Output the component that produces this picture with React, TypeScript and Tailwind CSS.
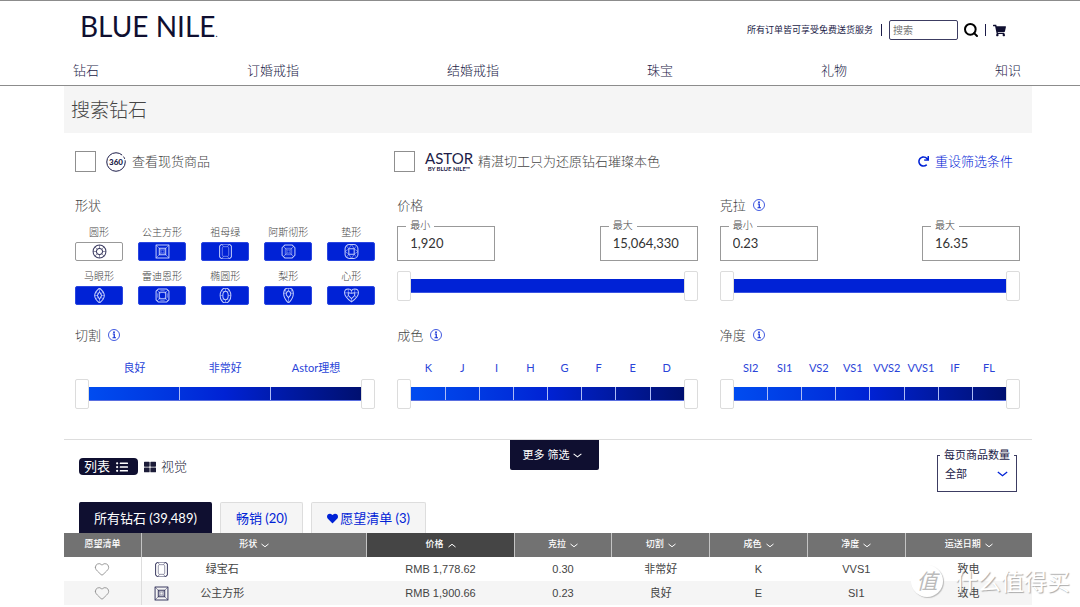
import React from "react";
import { FaHeart, FaListUl, FaRedo, FaShoppingCart, FaThLarge } from "react-icons/fa";
import { Heart, Search } from "lucide-react";

type ShapeKind =
  | "round"
  | "princess"
  | "emerald"
  | "asscher"
  | "cushion"
  | "marquise"
  | "radiant"
  | "oval"
  | "pear"
  | "heart";

function ShapeIcon({ kind }: { kind: ShapeKind }) {
  const drawings: Record<ShapeKind, React.ReactNode> = {
    round: (
      <>
        <circle cx="14" cy="14" r="12" />
        <path d="M14 8l4.3 1.7L20 14l-1.7 4.3L14 20l-4.3-1.7L8 14l1.7-4.3z" />
        <path d="M14 2v6M26 14h-6M14 26v-6M2 14h6M22.5 5.5l-4.2 4.2M22.5 22.5l-4.2-4.2M5.5 22.5l4.2-4.2M5.5 5.5l4.2 4.2" strokeWidth="1" />
      </>
    ),
    princess: (
      <>
        <path d="M2 2h24v24H2zM8 8h12v12H8z" />
        <path d="M2 2l9 9M26 2l-9 9M2 26l9-9M26 26l-9-9M11 11h6v6h-6z" strokeWidth="1" />
      </>
    ),
    emerald: (
      <>
        <path d="M7 0h14l4 4v20l-4 4H7l-4-4V4z" />
        <path d="M10 5h8l2 2v14l-2 2h-8l-2-2V7zM7 0l3 5M21 0l-3 5M7 28l3-5M21 28l-3-5" strokeWidth="1" />
      </>
    ),
    asscher: (
      <>
        <path d="M7 2h14l5 5v14l-5 5H7l-5-5V7z" />
        <path d="M8 8h12v12H8zM11 11h6v6h-6zM4 4l7 7M24 4l-7 7M4 24l7-7M24 24l-7-7" strokeWidth="1" />
      </>
    ),
    cushion: (
      <>
        <rect x="2" y="1" width="24" height="26" rx="8" />
        <path d="M9 9h10v10H9z" />
        <path d="M9 9L5 4M19 9l4-5M9 19l-4 5M19 19l4 5M9 9l5-8 5 8 7 5-7 5-5 8-5-8-7-5z" strokeWidth="1" />
      </>
    ),
    marquise: (
      <>
        <path d="M14 0c6 5 9 9 9 14s-3 9-9 14C8 23 5 19 5 14S8 5 14 0z" />
        <path d="M14 7l4 7-4 7-4-7z" />
        <path d="M14 0v7M14 28v-7M5 14h5M23 14h-5M8 7l3 5M20 7l-3 5M8 21l3-5M20 21l-3-5" strokeWidth="1" />
      </>
    ),
    radiant: (
      <>
        <path d="M6 2h16l4 4v16l-4 4H6l-4-4V6z" />
        <path d="M8 8h12v12H8z" />
        <path d="M4 4l6 6M24 4l-6 6M4 24l6-6M24 24l-6-6M5 10v8M23 10v8M10 5h8M10 23h8" strokeWidth="1" />
      </>
    ),
    oval: (
      <>
        <ellipse cx="14" cy="14" rx="10" ry="14" />
        <ellipse cx="14" cy="14" rx="5" ry="8" />
        <path d="M14 0v6M14 22v6M4 14h5M19 14h5M7 4l4 4M21 4l-4 4M7 24l4-4M21 24l-4-4" strokeWidth="1" />
      </>
    ),
    pear: (
      <>
        <path d="M14 28C9 23 5 17 5 10.500C5 4 9 0 14 0s9 4 9 10.500C23 17 19 23 14 28z" />
        <path d="M14 18l-4-5V9l4-4 4 4v4z" />
        <path d="M14 28V18M14 0v5M5 10h5M23 10h-5M8 3l2 6M20 3l-2 6" strokeWidth="1" />
      </>
    ),
    heart: (
      <>
        <path d="M14 26C7 21 1 16 1 9c0-4 3-7 7-7 3 0 5 1 6 3 1-2 3-3 6-3 4 0 7 3 7 7 0 7-6 12-13 17z" />
        <path d="M14 20l-6-6V9l6 1 6-1v5z" />
        <path d="M14 26v-6M14 5v5M1 9h7M27 9h-7M5 18l3-4M23 18l-3-4M8 2v7M20 2v7" strokeWidth="1" />
      </>
    ),
  };
  return (
    <svg viewBox="0 0 28 28" className="size-[15px]" fill="none" stroke="currentColor" strokeWidth="1.900" strokeLinejoin="round" aria-hidden="true">
      {drawings[kind]}
    </svg>
  );
}

function Chevron({ up = false, className = "" }: { up?: boolean; className?: string }) {
  return (
    <svg viewBox="0 0 16 9" className={className} fill="none" stroke="currentColor" strokeWidth="2" aria-hidden="true">
      <path d={up ? "M1 7.500l7-5.500 7 5.500" : "M1 1.500l7 5.500 7-5.500"} />
    </svg>
  );
}

function InfoButton({ topic }: { topic: string }) {
  return (
    <button type="button" aria-label={topic} className="text-[#1230d8]">
      <svg viewBox="0 0 24 24" className="size-3" fill="none" stroke="currentColor" strokeWidth="1.600" aria-hidden="true">
        <circle cx="12" cy="12" r="11" />
        <path d="M9.500 10H12.500v7M9 17.500h7" strokeWidth="2.400" />
        <circle cx="12" cy="6.300" r="1.800" fill="currentColor" stroke="none" />
      </svg>
    </button>
  );
}

function FilterHeading({ title, info = false }: { title: string; info?: boolean }) {
  return (
    <div className="flex h-4 items-center gap-[7px]">
      <h2 className="text-[13px] leading-4 font-light">{title}</h2>
      {info && <InfoButton topic={title} />}
    </div>
  );
}

const rangeClass =
  "pointer-events-none absolute inset-0 h-full w-full cursor-pointer appearance-none bg-transparent " +
  "[&::-webkit-slider-thumb]:pointer-events-auto [&::-webkit-slider-thumb]:h-[30px] [&::-webkit-slider-thumb]:w-[14px] " +
  "[&::-webkit-slider-thumb]:appearance-none [&::-webkit-slider-thumb]:rounded-xs [&::-webkit-slider-thumb]:border " +
  "[&::-webkit-slider-thumb]:border-[#dcdcdc] [&::-webkit-slider-thumb]:bg-white";

function DualRange({ name, steps }: { name: string; steps?: number }) {
  return (
    <div className="relative flex h-[30px] items-center px-[14px]">
      {steps ? (
        <div className="flex h-[14px] w-full divide-x divide-[#aebcf5] border-b border-[#5a6fe0] bg-linear-to-r from-[#004cf0] via-[#0022d4] to-[#001070]">
          {Array.from({ length: steps }, (_, i) => (
            <span key={i} className="flex-1" />
          ))}
        </div>
      ) : (
        <div className="h-[14px] w-full border-b border-[#3a54e2] bg-[#0022d6]" />
      )}
      <input type="range" aria-label={`${name} 最小`} min={0} max={100} defaultValue={0} className={rangeClass} />
      <input type="range" aria-label={`${name} 最大`} min={0} max={100} defaultValue={100} className={rangeClass} />
    </div>
  );
}

function NumberBox({ label, value }: { label: string; value: string }) {
  return (
    <label className="relative flex h-[35px] w-[98px] border border-[#999]">
      <span className="absolute -top-2 left-2 bg-white px-1 text-[10px] leading-3 font-light">{label}</span>
      <input type="text" defaultValue={value} className="w-full bg-transparent pl-3 text-[13px] text-[#333] outline-none" />
    </label>
  );
}

function ValueFilter({ title, info, min, max }: { title: string; info?: boolean; min: string; max: string }) {
  return (
    <section>
      <FilterHeading title={title} info={info} />
      <div className="mt-[13px] flex justify-between">
        <NumberBox label="最小" value={min} />
        <NumberBox label="最大" value={max} />
      </div>
      <div className="mt-[10px]">
        <DualRange name={title} />
      </div>
    </section>
  );
}

function GradeFilter({ title, grades }: { title: string; grades: string[] }) {
  return (
    <section>
      <FilterHeading title={title} info />
      <div className="mt-[18px] flex px-[14px] text-[11px] leading-[14px] text-[#2a44d8]">
        {grades.map((g) => (
          <span key={g} className="flex flex-1 justify-center whitespace-nowrap">
            {g}
          </span>
        ))}
      </div>
      <div className="mt-1">
        <DualRange name={title} steps={grades.length} />
      </div>
    </section>
  );
}

const shapes: { name: string; kind: ShapeKind }[] = [
  { name: "圆形", kind: "round" },
  { name: "公主方形", kind: "princess" },
  { name: "祖母绿", kind: "emerald" },
  { name: "阿斯彻形", kind: "asscher" },
  { name: "垫形", kind: "cushion" },
  { name: "马眼形", kind: "marquise" },
  { name: "雷迪恩形", kind: "radiant" },
  { name: "椭圆形", kind: "oval" },
  { name: "梨形", kind: "pear" },
  { name: "心形", kind: "heart" },
];

function ShapeFilter() {
  return (
    <section>
      <FilterHeading title="形状" />
      <div className="mt-3 grid grid-cols-5 gap-x-[15px] gap-y-2">
        {shapes.map(({ name, kind }) => (
          <label key={kind} className="flex flex-col gap-[3px] text-center">
            <span className="flex justify-center text-[10px] leading-[14px] font-light whitespace-nowrap">{name}</span>
            <button
              type="button"
              aria-label={name}
              className={
                kind === "round"
                  ? "flex h-[19px] items-center justify-center rounded-xs border border-[#999] bg-white text-[#3c3c62]"
                  : "flex h-[19px] items-center justify-center rounded-xs border border-[#2a46e0] bg-[#0022d6] text-[#c3cdfb]"
              }
            >
              <ShapeIcon kind={kind} />
            </button>
          </label>
        ))}
      </div>
    </section>
  );
}

function SiteHeader() {
  return (
    <header className="border-y border-[#8c8c8c] pt-[14px] pr-12 pb-1 pl-16 text-[#1c1c48]">
      <div className="flex h-[30px] items-center justify-between pr-[26px] pl-4">
        <a href="#home" className="text-[28px] leading-8 text-[#0f0f30]">
          BLUE NILE<span className="text-[9px]">.</span>
        </a>
        <div className="flex items-center text-[9px]">
          <span>所有订单皆可享受免费送货服务</span>
          <span className="ml-2 h-3 w-px bg-[#1c1c48]" />
          <input
            type="search"
            aria-label="搜索"
            placeholder="搜索"
            className="ml-[7px] h-5 w-[69px] rounded-xs border border-[#3c3c62] px-[3px] text-[10px] placeholder:text-[#777]"
          />
          <button type="button" aria-label="提交搜索" className="ml-[5px] text-black">
            <Search className="size-4" strokeWidth={3} />
          </button>
          <span className="ml-[6px] h-3 w-px bg-[#1c1c48]" />
          <a href="#cart" aria-label="购物车" className="ml-[7px] text-[#0f0f30]">
            <FaShoppingCart className="size-[13px]" />
          </a>
        </div>
      </div>
      <nav className="mt-4 flex h-5 items-center justify-between pr-[11px] pl-[9px] text-[13px] font-light">
        {["钻石", "订婚戒指", "结婚戒指", "珠宝", "礼物", "知识"].map((item) => (
          <a key={item} href={`#${item}`}>
            {item}
          </a>
        ))}
      </nav>
    </header>
  );
}

const checkClass = "size-[21px] appearance-none border border-[#8f8f8f] bg-white checked:bg-[#0022d6]";

function QuickFilters() {
  return (
    <div className="mt-[18px] flex h-[21px] items-center justify-between pr-[19px] pl-[11px] text-[13px] font-light">
      <label className="flex w-[319px] items-center">
        <input type="checkbox" className={checkClass} />
        <svg viewBox="0 0 40 40" className="ml-[10px] size-5 text-[#1c1c48]" aria-hidden="true">
          <circle cx="20" cy="20" r="18.500" fill="none" stroke="currentColor" strokeWidth="2" strokeDasharray="100 4 5 3 5 4" />
          <text x="20" y="26" textAnchor="middle" fontSize="16" fontWeight="900" fill="currentColor">
            360
          </text>
        </svg>
        <span className="ml-[6px]">查看现货商品</span>
      </label>
      <label className="flex flex-1 items-center">
        <input type="checkbox" className={checkClass} />
        <span className="ml-[10px] flex flex-col items-center text-[#1c1c48]">
          <span className="text-[15px] leading-[15px] font-normal">ASTOR</span>
          <span className="text-[6px] leading-[6px] font-bold">BY BLUE NILE™</span>
        </span>
        <span className="ml-[5px]">精湛切工只为还原钻石璀璨本色</span>
      </label>
      <button type="button" className="flex items-center gap-[6px] text-[#0022d6]">
        <FaRedo className="size-[11px]" />
        重设筛选条件
      </button>
    </div>
  );
}

function ResultsToolbar() {
  return (
    <div className="mt-[30px] grid grid-cols-[1fr_auto_1fr] items-start border-t border-[#ddd] pr-[15px] pl-7">
      <div className="-ml-[13px] flex items-center pt-[18px] text-[13px]">
        <button type="button" className="flex h-[17px] w-[59px] items-center gap-[6px] rounded-sm bg-[#0f0f30] pl-[5px] text-white">
          列表
          <FaListUl className="size-3" />
        </button>
        <button type="button" className="ml-[6px] flex h-[17px] items-center gap-[5px] text-[#1c1c38]">
          <FaThLarge className="size-3" />
          <span className="font-light">视觉</span>
        </button>
      </div>
      <button type="button" className="flex h-[30px] items-center gap-1 rounded-b-xs bg-[#0f0f30] pr-[17px] pl-[13px] text-[11px] text-white">
        更多 筛选
        <Chevron className="h-[5px] w-[9px]" />
      </button>
      <label className="relative mt-[15px] mb-[10px] flex h-[37px] w-20 items-center justify-self-end border border-[#3c3c62] text-[11px] text-[#1c1c48]">
        <span className="absolute -top-2 left-[2px] bg-white px-1 leading-[14px] whitespace-nowrap">每页商品数量</span>
        <select className="h-full w-full appearance-none bg-transparent pt-0.5 pl-[7px]" defaultValue="all">
          <option value="all">全部</option>
        </select>
        <Chevron className="pointer-events-none absolute right-2 h-[6px] w-[11px] text-[#0022d6]" />
      </label>
    </div>
  );
}

const columns = [
  { title: "愿望清单", width: "w-[8%]" },
  { title: "形状", width: "w-[23.3%]", sort: "down" },
  { title: "价格", width: "w-[15.2%]", sort: "up" },
  { title: "克拉", width: "w-[10.1%]", sort: "down" },
  { title: "切割", width: "w-[10.1%]", sort: "down" },
  { title: "成色", width: "w-[10.1%]", sort: "down" },
  { title: "净度", width: "w-[10.1%]", sort: "down" },
  { title: "运送日期", width: "w-[13.1%]", sort: "down" },
];

const diamonds: { kind: ShapeKind; cells: string[] }[] = [
  { kind: "emerald", cells: ["绿宝石", "RMB 1,778.62", "0.30", "非常好", "K", "VVS1", "致电"] },
  { kind: "princess", cells: ["公主方形", "RMB 1,900.66", "0.23", "良好", "E", "SI1", "致电"] },
];

function Results() {
  return (
    <section>
      <div role="tablist" className="flex items-stretch gap-2 pl-[15px] text-[13px] leading-[30px] text-[#0022d6]">
        <button type="button" role="tab" aria-selected="true" className="rounded-t-xs border-t border-[#0f0f30] bg-[#0f0f30] px-[15px] text-white">
          所有钻石 (39,489)
        </button>
        <button type="button" role="tab" className="rounded-t-xs border border-b-0 border-[#ddd] bg-[#f5f5f5] px-[15px]">
          畅销 (20)
        </button>
        <button type="button" role="tab" className="flex items-center gap-[2px] rounded-t-xs border border-b-0 border-[#ddd] bg-[#f5f5f5] px-[15px]">
          <FaHeart className="size-[11px]" />
          愿望清单 (3)
        </button>
      </div>
      <table className="w-full table-fixed border-collapse text-center font-['Liberation_Sans','Noto_Sans_CJK_SC',sans-serif] text-[11px]">
        <thead>
          <tr className="h-6 bg-[#727272] text-[9px] text-white">
            {columns.map((c) => (
              <th
                key={c.title}
                scope="col"
                className={`${c.width} border-r border-[#c4c4c4] p-0 font-medium last:border-r-0 ${c.sort === "up" ? "bg-[#454545]" : ""}`}
              >
                {c.sort ? (
                  <button type="button" className="inline-flex items-center gap-1">
                    {c.title}
                    <Chevron up={c.sort === "up"} className="h-[5px] w-2" />
                  </button>
                ) : (
                  c.title
                )}
              </th>
            ))}
          </tr>
        </thead>
        <tbody className="text-[#444]">
          {diamonds.map(({ kind, cells }) => (
            <tr key={kind} className="h-6 even:bg-[#f5f5f5]">
              <td className="border-r border-[#ddd] p-0">
                <button type="button" aria-label="加入愿望清单" className="flex w-full justify-center text-[#888]">
                  <Heart className="size-4" strokeWidth={1.25} />
                </button>
              </td>
              <td className="p-0">
                <div className="flex items-center pl-3 text-left">
                  <span className="text-[#3c3c62]">
                    <ShapeIcon kind={kind} />
                  </span>
                  <span className="w-1/2 text-center">{cells[0]}</span>
                </div>
              </td>
              {cells.slice(1).map((cell, i) => (
                <td key={i} className="p-0">
                  {cell}
                </td>
              ))}
            </tr>
          ))}
        </tbody>
      </table>
    </section>
  );
}

function Watermark() {
  return (
    <div className="pointer-events-none absolute right-[10px] bottom-[10px] flex items-center gap-3 text-[23px] leading-8 [text-shadow:1px_1px_1px_#aaa]">
      <span className="flex size-8 items-center justify-center rounded-full bg-white text-[21px] text-[#bbb] italic shadow-[1px_1px_1px_#bbb] [text-shadow:none]">
        值
      </span>
      <span className="text-white">什么值得买</span>
    </div>
  );
}

export default function App() {
  return (
    <div className="relative min-h-screen bg-white font-[Lato,'Noto_Sans_CJK_SC',sans-serif] text-[#444]">
      <SiteHeader />
      <main className="mr-12 ml-16">
        <h1 className="bg-[#f5f5f5] px-[7px] py-[11px] text-[19px] leading-[25px] font-light">搜索钻石</h1>
        <QuickFilters />
        <div className="mt-[25px] grid grid-cols-3 gap-[22px] pr-3 pl-[11px]">
          <ShapeFilter />
          <ValueFilter title="价格" min="1,920" max="15,064,330" />
          <ValueFilter title="克拉" info min="0.23" max="16.35" />
          <GradeFilter title="切割" grades={["良好", "非常好", "Astor理想"]} />
          <GradeFilter title="成色" grades={["K", "J", "I", "H", "G", "F", "E", "D"]} />
          <GradeFilter title="净度" grades={["SI2", "SI1", "VS2", "VS1", "VVS2", "VVS1", "IF", "FL"]} />
        </div>
        <ResultsToolbar />
        <Results />
      </main>
      <Watermark />
    </div>
  );
}
